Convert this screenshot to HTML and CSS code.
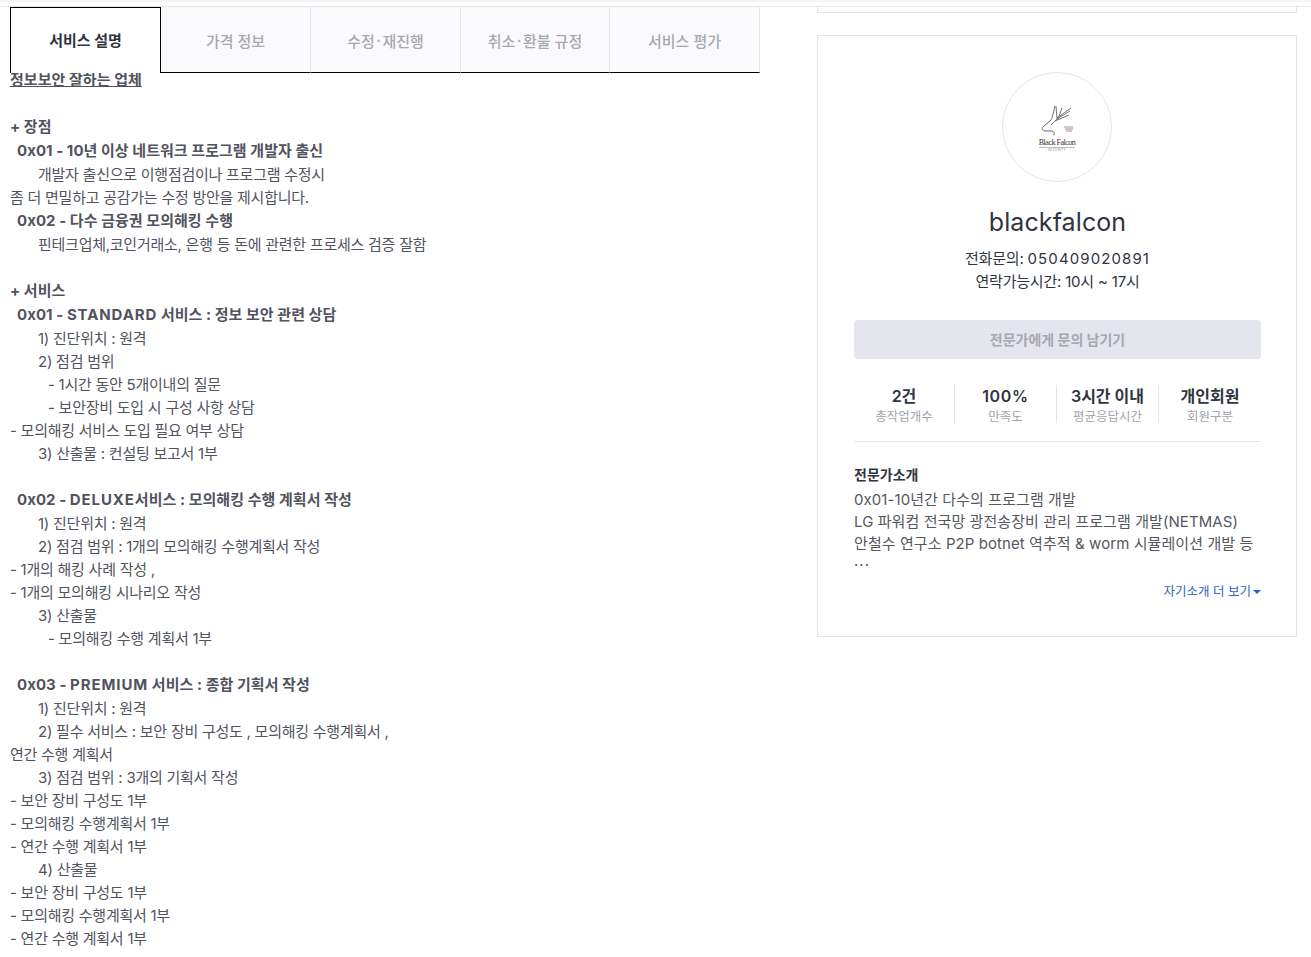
FILE: index.html
```html
<!DOCTYPE html>
<html lang="ko">
<head>
<meta charset="utf-8">
<title>서비스 설명</title>
<link rel="stylesheet" href="styles.css">
</head>
<body>
<div class="topbar"></div>
<div class="page">
  <main class="main">
    <nav class="tabs">
      <div class="tab active">서비스 설명</div>
      <div class="tab">가격 정보</div>
      <div class="tab">수정<span class="mid">·</span>재진행</div>
      <div class="tab">취소<span class="mid">·</span>환불 규정</div>
      <div class="tab">서비스 평가</div>
    </nav>
    <article class="desc">
      <p class="b u">정보보안 잘하는 업체</p>
      <p>&nbsp;</p>
      <p class="b">+ 장점</p>
      <p class="b i1">0x01 - 10년 이상 네트워크 프로그램 개발자 출신</p>
      <p class="i2">개발자 출신으로 이행점검이나 프로그램 수정시</p>
      <p>좀 더 면밀하고 공감가는 수정 방안을 제시합니다.</p>
      <p class="b i1">0x02 - 다수 금융권 모의해킹 수행</p>
      <p class="i2">핀테크업체,코인거래소, 은행 등 돈에 관련한 프로세스 검증 잘함</p>
      <p>&nbsp;</p>
      <p class="b">+ 서비스</p>
      <p class="b i1">0x01 - <span class="latin">STANDARD</span> 서비스 : 정보 보안 관련 상담</p>
      <p class="i2">1) 진단위치 : 원격</p>
      <p class="i2">2) 점검 범위</p>
      <p class="i3">- 1시간 동안 5개이내의 질문</p>
      <p class="i3">- 보안장비 도입 시 구성 사항 상담</p>
      <p>- 모의해킹 서비스 도입 필요 여부 상담</p>
      <p class="i2">3) 산출물 : 컨설팅 보고서 1부</p>
      <p>&nbsp;</p>
      <p class="b i1">0x02 - <span class="latin">DELUXE</span>서비스 : 모의해킹 수행 계획서 작성</p>
      <p class="i2">1) 진단위치 : 원격</p>
      <p class="i2">2) 점검 범위 : 1개의 모의해킹 수행계획서 작성</p>
      <p>- 1개의 해킹 사례 작성 ,</p>
      <p>- 1개의 모의해킹 시나리오 작성</p>
      <p class="i2">3) 산출물</p>
      <p class="i3">- 모의해킹 수행 계획서 1부</p>
      <p>&nbsp;</p>
      <p class="b i1">0x03 - <span class="latin">PREMIUM</span> 서비스 : 종합 기획서 작성</p>
      <p class="i2">1) 진단위치 : 원격</p>
      <p class="i2">2) 필수 서비스 : 보안 장비 구성도 , 모의해킹 수행계획서 ,</p>
      <p>연간 수행 계획서</p>
      <p class="i2">3) 점검 범위 : 3개의 기획서 작성</p>
      <p>- 보안 장비 구성도 1부</p>
      <p>- 모의해킹 수행계획서 1부</p>
      <p>- 연간 수행 계획서 1부</p>
      <p class="i2">4) 산출물</p>
      <p>- 보안 장비 구성도 1부</p>
      <p>- 모의해킹 수행계획서 1부</p>
      <p>- 연간 수행 계획서 1부</p>
    </article>
  </main>
  <aside class="side">
    <div class="stub"></div>
    <section class="card">
      <div class="avatar">
        <svg class="logo" viewBox="0 0 38 33" width="38" height="33" aria-hidden="true">
          <path d="M17 1C15 9 14 14 13 15L5 22C3 24 5 26 8 26L14 26C17 27 17 30 15 30" fill="none" stroke="#666" stroke-width="1"/>
          <path d="M18 1L19 14L13 20M19 13L33 3M19 14L32 6M17 16L31 10M20 14L24 3" fill="none" stroke="#666" stroke-width=".9"/>
          <path d="M26 22h9M28 26h6" stroke="#888" stroke-width=".9"/>
          <path d="M27 24h8" stroke="#b07f8b" stroke-width="1"/>
        </svg>
        <span class="logo-text">Black Falcon</span>
        <span class="logo-sub">SECURITY</span>
      </div>
      <h2 class="name">blackfalcon</h2>
      <p class="contact">전화문의: <span class="num">050409020891</span></p>
      <p class="contact">연락가능시간: 10시 ~ 17시</p>
      <button class="ask" type="button">전문가에게 문의 남기기</button>
      <ul class="stats">
        <li class="stat"><strong>2건</strong><span>총작업개수</span></li>
        <li class="stat"><strong class="wide">100%</strong><span>만족도</span></li>
        <li class="stat"><strong>3시간 이내</strong><span>평균응답시간</span></li>
        <li class="stat"><strong>개인회원</strong><span>회원구분</span></li>
      </ul>
      <h3 class="intro-title">전문가소개</h3>
      <p class="intro">0x01-10년간 다수의 프로그램 개발</p>
      <p class="intro">LG 파워컴 전국망 광전송장비 관리 프로그램 개발(NETMAS)</p>
      <p class="intro">안철수 연구소 P2P botnet 역추적 &amp; worm 시뮬레이션 개발 등</p>
      <p class="dots">...</p>
      <a class="more">자기소개 더 보기<i class="caret"></i></a>
    </section>
  </aside>
</div>
</body>
</html>
```
FILE: styles.css
```css
* { box-sizing: border-box; }
html, body { margin: 0; padding: 0; background: #fff; }
body { font-family: "Inter", "Noto Sans CJK KR", sans-serif; color: #51535f; overflow: hidden; height: 957px; }
p, h2, h3, ul { margin: 0; padding: 0; list-style: none; }
.topbar { height: 7px; border-top: 2px solid #f5f5f7; border-bottom: 1px solid #e6e6e9; }
.page { display: flex; align-items: flex-start; padding-left: 10px; }
.main { width: 750px; }
.tabs { display: grid; grid-template-columns: 151px 150px 150px 149px 150px; height: 66px; position: relative; z-index: 1; }
.tab { display: flex; align-items: center; justify-content: center; background: #fafafc; color: #a6a8b0; font-size: 15px; font-weight: 500; border-right: 1px solid #e4e5e9; border-bottom: 1px solid #000; padding-top: 1px; }
.mid { margin: 0 1.5px; }
.tab.active { background: #fff; color: #303441; font-weight: 700; border: 1px solid #000; border-bottom: 0; padding: 0 0 3px; }
.desc { font-size: 15px; letter-spacing: -0.25px; margin-top: -5px; }
.desc p { height: 23px; line-height: 23px; white-space: nowrap; }
.desc p.b { height: 24px; line-height: 24px; font-weight: 700; letter-spacing: 0.05px; }
.latin { letter-spacing: .9px; }
.u { text-decoration: underline; }
.desc .i1 { padding-left: 7px; }
.i2 { padding-left: 28px; }
.i3 { padding-left: 38px; }
.side { width: 480px; margin-left: 57px; }
.stub { height: 6px; border: 1px solid #e4e5e9; border-top: 0; }
.card { margin-top: 22px; height: 602px; border: 1px solid #e4e5e9; padding: 36px 35px 0 36px; text-align: center; }
.avatar { width: 110px; height: 110px; border: 1px solid #e4e5e9; border-radius: 50%; margin-left: 148px; padding-top: 3px; display: flex; flex-direction: column; align-items: center; justify-content: center; }
.logo { display: block; width: 38px; height: 33px; }
.logo-text { font-size: 8px; line-height: 9px; color: #333; font-family: "Liberation Serif", serif; letter-spacing: -.5px; border-bottom: 1px solid #bbb; }
.logo-sub { font-size: 3px; line-height: 5px; color: #888; letter-spacing: .4px; }
.name { font-size: 25px; font-weight: 400; line-height: 32px; color: #303441; margin-top: 24px; letter-spacing: .1px; }
.contact { font-size: 15px; line-height: 23px; color: #303441; letter-spacing: -0.2px; }
.contact:first-of-type { margin-top: 9px; }
.num { letter-spacing: 1.1px; }
.ask { display: block; width: 100%; height: 39px; margin-top: 27px; border: 0; border-radius: 4px; background: #e4e5ed; color: #a6a8b0; font: 700 14px "Inter", "Noto Sans CJK KR", sans-serif; padding: 0 0 2px; }
.stats { display: grid; grid-template-columns: 100px 102px 102px 103px; margin-top: 26px; padding-bottom: 18px; border-bottom: 1px solid #e4e5e9; }
.stat { display: flex; flex-direction: column; align-items: center; border-left: 1px solid #e4e5e9; height: 38px; padding-top: 1px; }
.stat:first-child { border-left: 0; }
.stat strong { font-size: 16px; line-height: 20px; font-weight: 600; color: #303441; }
.stat .wide { letter-spacing: .7px; }
.stat span { font-size: 12.5px; line-height: 20px; color: #a2a4ac; margin-top: 1px; }
.intro-title { text-align: left; font-size: 14px; line-height: 20px; font-weight: 700; color: #303441; margin-top: 23px; }
.intro { text-align: left; font-size: 15px; line-height: 22px; color: #55575f; white-space: nowrap; letter-spacing: .08px; }
.intro-title + .intro { margin-top: 4px; }
.dots { text-align: left; font-size: 15px; line-height: 12px; color: #55575f; letter-spacing: 1px; }
.more { display: block; text-align: right; font-size: 12.5px; line-height: 18px; color: #2f62c8; margin-top: 16px; }
.caret { display: inline-block; margin-left: 2px; vertical-align: 2px; border: 4px solid transparent; border-top-color: #2f62c8; border-bottom: 0; }
```
